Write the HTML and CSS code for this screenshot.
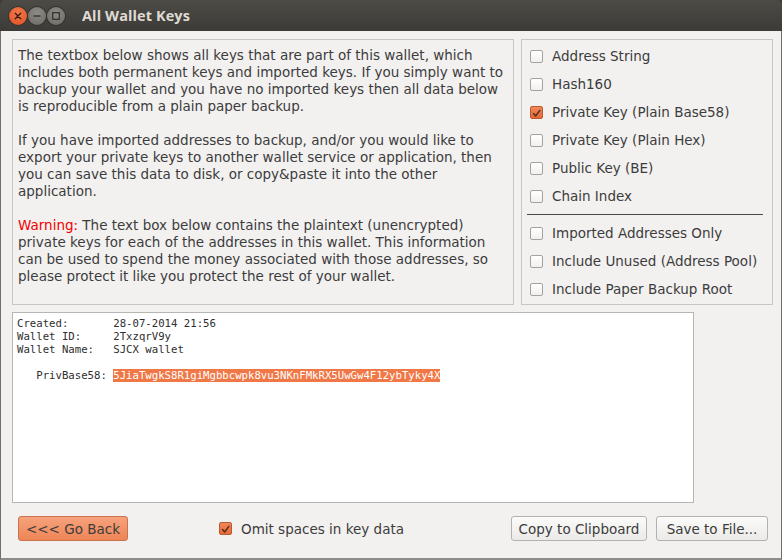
FILE: index.html
```html
<!DOCTYPE html>
<html>
<head>
<meta charset="utf-8">
<link rel="stylesheet" href="styles.css">
</head>
<body>
<div class="window">
  <div class="titlebar">
    <div class="wbtns">
      <span class="wbtn close"><svg width="18" height="18" viewBox="0 0 18 18"><path d="M6.3 6.3 L11.7 11.7 M11.7 6.3 L6.3 11.7" stroke="#3a1a10" stroke-width="1.4" stroke-linecap="round"/></svg></span>
      <span class="wbtn"><svg width="18" height="18" viewBox="0 0 18 18"><path d="M5.5 9 H12.5" stroke="#35342f" stroke-width="1.4"/></svg></span>
      <span class="wbtn"><svg width="18" height="18" viewBox="0 0 18 18"><rect x="5.7" y="5.7" width="6.6" height="6.6" fill="none" stroke="#35342f" stroke-width="1.3"/></svg></span>
    </div>
    <div class="title">All Wallet Keys</div>
  </div>
  <div class="content">
    <div class="toprow">
      <div class="panel info">
        <p>The textbox below shows all keys that are part of this wallet, which includes both permanent keys and imported keys. If you simply want to backup your wallet and you have no imported keys then all data below is reproducible from a plain paper backup.</p>
        <p>If you have imported addresses to backup, and/or you would like to export your private keys to another wallet service or application, then you can save this data to disk, or copy&amp;paste it into the other application.</p>
        <p><span class="warn">Warning:</span> The text box below contains the plaintext (unencrypted) private keys for each of the addresses in this wallet. This information can be used to spend the money associated with those addresses, so please protect it like you protect the rest of your wallet.</p>
      </div>
      <div class="panel opts">
        <div class="opt"><span class="cb"></span>Address String</div>
        <div class="opt"><span class="cb"></span>Hash160</div>
        <div class="opt"><span class="cb on"><svg width="13" height="13" viewBox="0 0 13 13"><path d="M3 6.5 L5.5 9.5 L10.5 2.8" fill="none" stroke="#5b2e1a" stroke-width="1.8" stroke-linecap="round" stroke-linejoin="round"/></svg></span>Private Key (Plain Base58)</div>
        <div class="opt"><span class="cb"></span>Private Key (Plain Hex)</div>
        <div class="opt"><span class="cb"></span>Public Key (BE)</div>
        <div class="opt"><span class="cb"></span>Chain Index</div>
        <div class="sep"></div>
        <div class="opt"><span class="cb"></span>Imported Addresses Only</div>
        <div class="opt"><span class="cb"></span>Include Unused (Address Pool)</div>
        <div class="opt"><span class="cb"></span>Include Paper Backup Root</div>
      </div>
    </div>
    <div class="textbox"><pre>Created:       28-07-2014 21:56
Wallet ID:     2TxzqrV9y
Wallet Name:   SJCX wallet

   PrivBase58: <span class="sel">5JiaTwgkS8R1giMgbbcwpk8vu3NKnFMkRX5UwGw4F12ybTyky4X</span></pre></div>
    <div class="bottomrow">
      <button class="btn back">&lt;&lt;&lt; Go Back</button>
      <div class="omit"><span class="cb on"><svg width="13" height="13" viewBox="0 0 13 13"><path d="M3 6.5 L5.5 9.5 L10.5 2.8" fill="none" stroke="#5b2e1a" stroke-width="1.8" stroke-linecap="round" stroke-linejoin="round"/></svg></span>Omit spaces in key data</div>
      <div class="spacer"></div>
      <button class="btn copy">Copy to Clipboard</button>
      <button class="btn save">Save to File...</button>
    </div>
  </div>
</div>
</body>
</html>
```
FILE: styles.css
```css
html, body {
  margin: 0;
  padding: 0;
  width: 782px;
  height: 560px;
  overflow: hidden;
  background: #3c3b37;
}
.window {
  width: 782px;
  height: 560px;
  display: flex;
  flex-direction: column;
  font-family: "DejaVu Sans", sans-serif;
  font-size: 13.5px;
  color: #3c3c3c;
}
.titlebar {
  height: 31px;
  flex: none;
  background: linear-gradient(#4c4b46, #3c3b37);
  display: flex;
  align-items: center;
  border-radius: 5px 5px 0 0;
}
.wbtns {
  display: flex;
  gap: 1px;
  padding-left: 9px;
}
.wbtn {
  width: 18px;
  height: 18px;
  border-radius: 50%;
  background: radial-gradient(circle at 50% 35%, #8e8c86, #6a6863);
  box-shadow: 0 0 0 1px #33322e;
  display: flex;
}
.wbtn.close {
  background: radial-gradient(circle at 50% 35%, #f37a4c, #dc4f1f);
}
.title {
  margin-left: 17px;
  color: #dfdbd2;
  font-family: "Open Sans", "DejaVu Sans", sans-serif;
  font-weight: bold;
  font-size: 14.5px;
  letter-spacing: 0.1px;
  margin-top: -1px;
}
.content {
  flex: 1;
  background: #f2f1f0;
  border-left: 1px solid #6f6e6a;
  border-right: 1px solid #6f6e6a;
  border-bottom: 2px solid #8e8c88;
  padding: 8px 8px 0 11px;
  display: flex;
  flex-direction: column;
}
.toprow {
  display: flex;
  gap: 7px;
  height: 266px;
}
.panel {
  border: 1px solid #c9c7c3;
  box-sizing: border-box;
}
.info {
  width: 502px;
  padding: 7px 6px 0 5px;
  line-height: 17px;
}
.info p {
  margin: 0 0 17px 0;
}
.warn {
  color: #f20000;
}
.opts {
  width: 252px;
  padding: 2px 0 0 0;
}
.opt {
  height: 28px;
  display: flex;
  align-items: center;
  padding-left: 8px;
}
.cb {
  width: 13px;
  height: 13px;
  box-sizing: border-box;
  border: 1px solid #a6a39e;
  border-radius: 2px;
  background: linear-gradient(#ffffff, #f1f0ee);
  margin-right: 9px;
  flex: none;
  display: flex;
}
.cb.on {
  background: linear-gradient(#f2875a, #e36a37);
  border-color: #b9592f;
}
.sep {
  height: 1px;
  background: #4a4a4a;
  margin: 4px 9px 4px 5px;
}
.textbox {
  margin-top: 7px;
  width: 682px;
  height: 191px;
  box-sizing: border-box;
  background: #ffffff;
  border: 1px solid #b8b6b2;
  padding: 4px 4px;
}
.textbox pre {
  margin: 0;
  font-family: "DejaVu Sans Mono", monospace;
  font-size: 10.67px;
  line-height: 13px;
  color: #2e2e2e;
}
.sel {
  background: #f07746;
  color: #ffffff;
}
.bottomrow {
  display: flex;
  align-items: center;
  margin-top: 13px;
  padding-left: 6px;
  padding-right: 5px;
  height: 25px;
}
.btn {
  font-family: "DejaVu Sans", sans-serif;
  font-size: 13.5px;
  color: #3c3c3c;
  height: 25px;
  padding: 0;
  white-space: nowrap;
  border: 1px solid #b5b2ad;
  border-radius: 3px;
  background: linear-gradient(#fbfbfa, #ebeae8);
  margin-left: 9px;
}
.btn.back {
  margin-left: 0;
  width: 110px;
  background: linear-gradient(#f6a27c, #ee8556);
  border-color: #c9744f;
}
.btn.copy {
  width: 136px;
}
.btn.save {
  width: 112px;
}
.omit {
  display: flex;
  align-items: center;
  margin-left: 91px;
}
.spacer {
  flex: 1;
}
```
